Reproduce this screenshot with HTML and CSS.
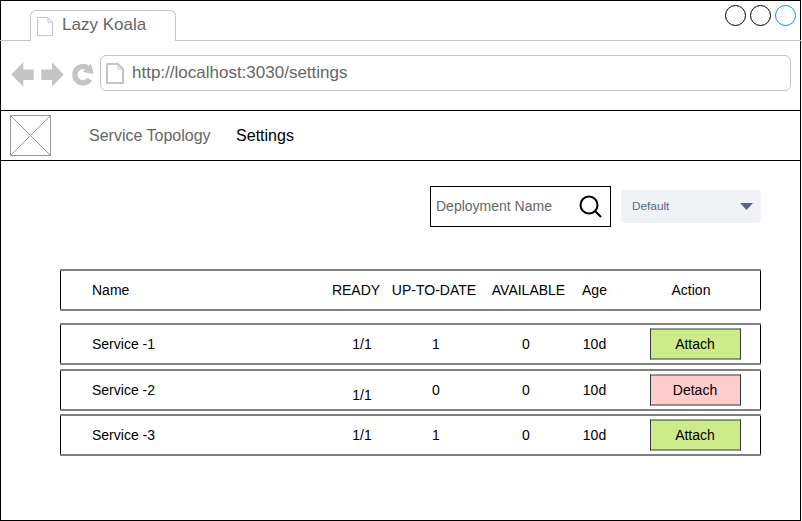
FILE: index.html
```html
<!DOCTYPE html>
<html lang="en">
<head>
<meta charset="utf-8">
<title>Lazy Koala</title>
<link rel="stylesheet" href="styles.css">
</head>
<body>
<div class="window">
  <header class="tabstrip">
    <div class="tab">
      <svg class="tab-icon" width="18" height="21" viewBox="0 0 18 21"><path d="M1.5 1.5H12L16.5 6V19.5H1.5ZM12 1.5V6H16.5" fill="none" stroke="#c4c4c4"/></svg>
      <span>Lazy Koala</span>
    </div>
    <div class="controls"><i class="dot"></i><i class="dot"></i><i class="dot dot-blue"></i></div>
  </header>
  <div class="toolbar">
    <svg class="tools" width="88" height="30" viewBox="0 0 88 30" fill="#c4c4c4">
      <path d="M2.300 14.500L14.300 2.300V9.500H24.700V20H14.300V26.500Z"/>
      <path d="M54.700 14.500L43 2.300V9.500H32.300V20H43V26.500Z"/>
      <path d="M80.800 19.200A8.200 8.200 0 1 1 78.500 7.800" fill="none" stroke="#c4c4c4" stroke-width="5.400"/>
      <path d="M82 3.500L84.700 14L73.800 12Z"/>
    </svg>
    <div class="address">
      <svg width="18" height="21" viewBox="0 0 18 21"><path d="M1 1H12L17 6V20H1Z" fill="none" stroke="#c4c4c4" stroke-width="2"/><path d="M12 1V6H17" fill="none" stroke="#c4c4c4"/></svg>
      <span>http://localhost:3030/settings</span>
    </div>
  </div>
  <nav class="nav">
    <svg class="logo" width="41" height="41" viewBox="0 0 41 41"><path d="M.5 .5H40.500V40.500H.5ZM.5 .5L40.500 40.500M40.500 .5L.5 40.500" fill="none" stroke="#999"/></svg>
    <a class="link muted">Service Topology</a>
    <a class="link">Settings</a>
  </nav>
  <main>
    <div class="filters">
      <div class="search"><span>Deployment Name</span>
        <svg width="24" height="24" viewBox="0 0 24 24" fill="none" stroke="#000" stroke-width="2"><circle cx="10" cy="10" r="8.500"/><path d="M16 16L22 22"/></svg>
      </div>
      <div class="select"><span>Default</span>
        <svg width="13" height="7" viewBox="0 0 13 7"><path d="M0 0H13L6.500 7Z" fill="#596780"/></svg>
      </div>
    </div>
    <div class="row head"><span class="name">Name</span><span>READY</span><span>UP-TO-DATE</span><span>AVAILABLE</span><span>Age</span><span class="action">Action</span></div>
    <div class="row"><span class="name">Service -1</span><span>1/1</span><span>1</span><span>0</span><span>10d</span><button class="btn attach">Attach</button></div>
    <div class="row second"><span class="name">Service -2</span><span class="lowered">1/1</span><span>0</span><span>0</span><span>10d</span><button class="btn detach">Detach</button></div>
    <div class="row third"><span class="name">Service -3</span><span>1/1</span><span>1</span><span>0</span><span>10d</span><button class="btn attach">Attach</button></div>
  </main>
</div>
</body>
</html>
```
FILE: styles.css
```css
* { box-sizing: border-box; }
body { margin: 0; background: #fff; font-family: "Liberation Sans", Arial, sans-serif; }
svg { display: block; flex: none; }
.window { width: 801px; height: 521px; border: 1px solid #000; }
.tabstrip { display: flex; justify-content: space-between; height: 40px; margin: 0 -1px; padding: 9px 5px 0 30px; background: linear-gradient(#c4c4c4, #c4c4c4) 0 100% / 100% 1px no-repeat; }
.tab { display: flex; width: 146px; height: 31px; padding: 5px 0 0 5px; border: 1px solid #c4c4c4; border-bottom: 0; border-radius: 6px 6px 0 0; background: #fff; color: #666; font-size: 17px; line-height: 18px; }
.tab span { margin-left: 8px; }
.controls { display: flex; gap: 4px; margin-top: -5px; }
.dot { width: 21px; height: 21px; border: 1px solid #000; border-radius: 50%; }
.dot-blue { border-color: #008cff; }
.toolbar { display: flex; height: 69px; padding: 14px 9px 0 8px; }
.tools { margin-top: 5px; }
.address { display: flex; width: 691px; height: 36px; margin-left: 3px; padding: 7px 0 0 5px; border: 1px solid #c4c4c4; border-radius: 6px; color: #666; font-size: 17px; line-height: 20px; }
.address span { margin-left: 8px; }
.nav { display: flex; align-items: center; height: 51px; padding-left: 9px; border: solid #000; border-width: 1px 0; font-size: 16px; }
.link { margin-left: 25.500px; }
.link.muted { margin-left: 38px; color: #666; }
main { padding: 25px 39px 0 59px; }
.filters { display: flex; justify-content: flex-end; gap: 10px; height: 83px; }
.search { display: flex; align-items: center; justify-content: space-between; width: 181px; height: 41px; padding: 0 7px 0 5px; border: 1px solid #000; color: #666; font-size: 14px; }
.search span { padding-bottom: 2px; }
.select { display: flex; align-items: center; justify-content: space-between; width: 140px; height: 33px; margin-top: 4px; padding: 0 8px 0 11px; border-radius: 4px; background: #f0f2f5; color: #596780; font-size: 11.800px; }
.select span { padding-bottom: 2px; }
.row { display: grid; grid-template-columns: 264px 76px 72px 108px 29px 152px; align-items: center; height: 42px; border: solid #808080; border-width: 2px 0; box-shadow: inset 1px 0 #000, inset -1px 0 #000; font-size: 14px; line-height: 16px; text-align: center; white-space: nowrap; }
.head { grid-template-columns: 266px 60px 96px 93px 39px 147px; margin-bottom: 12px; }
.second { margin-top: 4px; }
.third { margin-top: 3px; }
.row .name { padding-left: 32px; text-align: left; }
.action { padding-left: 7px; }
.lowered { padding-top: 10px; }
.btn { width: 91px; height: 32px; margin-left: 41px; padding: 0 1px 0 0; border: 1px solid #36393d; border-top-color: #9a9c9e; border-bottom-color: #9a9c9e; font: inherit; color: #000; }
.attach { background: #cdeb8b; box-shadow: inset 0 1px #829264, inset 0 -1px #829264; }
.detach { background: #fcc; box-shadow: inset 0 1px #9b8385, inset 0 -1px #9b8385; }
```
